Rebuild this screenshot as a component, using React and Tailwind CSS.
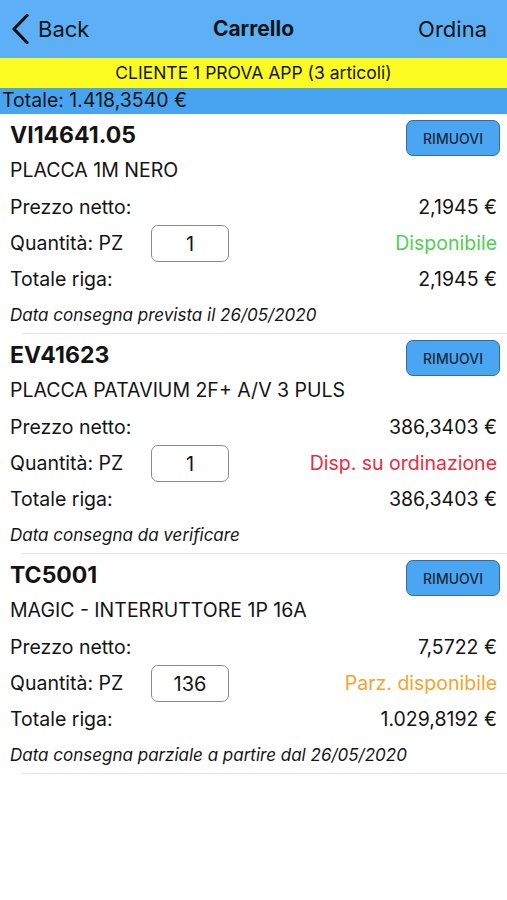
const items = [
  {
    code: 'VI14641.05',
    desc: 'PLACCA 1M NERO',
    price: '2,1945 €',
    qty: '1',
    status: 'Disponibile',
    statusColor: 'text-[#4fcf4f]',
    total: '2,1945 €',
    note: 'Data consegna prevista il 26/05/2020',
  },
  {
    code: 'EV41623',
    desc: 'PLACCA PATAVIUM 2F+ A/V 3 PULS',
    price: '386,3403 €',
    qty: '1',
    status: 'Disp. su ordinazione',
    statusColor: 'text-[#ee2a3c]',
    total: '386,3403 €',
    note: 'Data consegna da verificare',
  },
  {
    code: 'TC5001',
    desc: 'MAGIC - INTERRUTTORE 1P 16A',
    price: '7,5722 €',
    qty: '136',
    status: 'Parz. disponibile',
    statusColor: 'text-[#f5a42c]',
    total: '1.029,8192 €',
    note: 'Data consegna parziale a partire dal 26/05/2020',
  },
];

function CartItem({ item }) {
  return (
    <div>
      <div className="flex h-[219px] flex-col pl-[10px] pr-[10px] pt-[6px]">
        <div className="flex h-[36px] items-start justify-between">
          <span className="text-[23px] font-bold leading-[30px]">{item.code}</span>
          <button className="-mr-[3px] flex h-[36px] w-[94px] items-center justify-center rounded-[7px] border border-[#3d6a94] bg-[#4aa6f2] text-[14px] font-medium text-[#1a2a3a]">
            RIMUOVI
          </button>
        </div>
        <div className="flex h-[30px] items-center text-[19.5px]">{item.desc}</div>
        <div className="mt-[4px] flex h-[35px] items-center justify-between text-[19.5px]">
          <span>Prezzo netto:</span>
          <span>{item.price}</span>
        </div>
        <div className="flex h-[37px] items-center justify-between text-[19.5px]">
          <div className="flex items-center">
            <span className="w-[141px]">Quantità: PZ</span>
            <div className="flex h-[37px] w-[78px] items-center justify-center rounded-[7px] border border-[#8a8a8a] text-[20px]">
              {item.qty}
            </div>
          </div>
          <span className={item.statusColor}>{item.status}</span>
        </div>
        <div className="flex h-[36px] items-center justify-between text-[19.5px]">
          <span>Totale riga:</span>
          <span>{item.total}</span>
        </div>
        <div className="flex h-[35px] items-center text-[17px] italic">{item.note}</div>
      </div>
      <div className="ml-[22px] h-px bg-[#e3e3e3]" />
    </div>
  );
}

export default function App() {
  return (
    <div className="h-[900px] w-[507px] bg-white text-[#141414]" style={{ fontFamily: 'Inter, "Liberation Sans", sans-serif' }}>
      <div className="grid h-[58px] grid-cols-[1fr_auto_1fr] items-center bg-[#5db0f6]">
        <div className="flex items-center pl-[12px]">
          <svg width="17" height="30" viewBox="0 0 17 30" fill="none" className="text-[#111]">
            <polyline points="15,1.5 2,15 15,28.5" stroke="currentColor" strokeWidth="3.2" strokeLinecap="round" strokeLinejoin="round" />
          </svg>
          <span className="ml-[9px] text-[22px]">Back</span>
        </div>
        <span className="text-[21px] font-bold">Carrello</span>
        <span className="pr-[20px] text-right text-[22px]">Ordina</span>
      </div>
      <div className="flex h-[30px] items-center justify-center bg-[#fdfc22] text-[17.5px]">
        CLIENTE 1 PROVA APP (3 articoli)
      </div>
      <div className="flex h-[26px] items-center bg-[#47a4f0] pl-[2px] text-[19.5px]">Totale: 1.418,3540 €</div>
      {items.map((item) => (
        <CartItem key={item.code} item={item} />
      ))}
    </div>
  );
}
